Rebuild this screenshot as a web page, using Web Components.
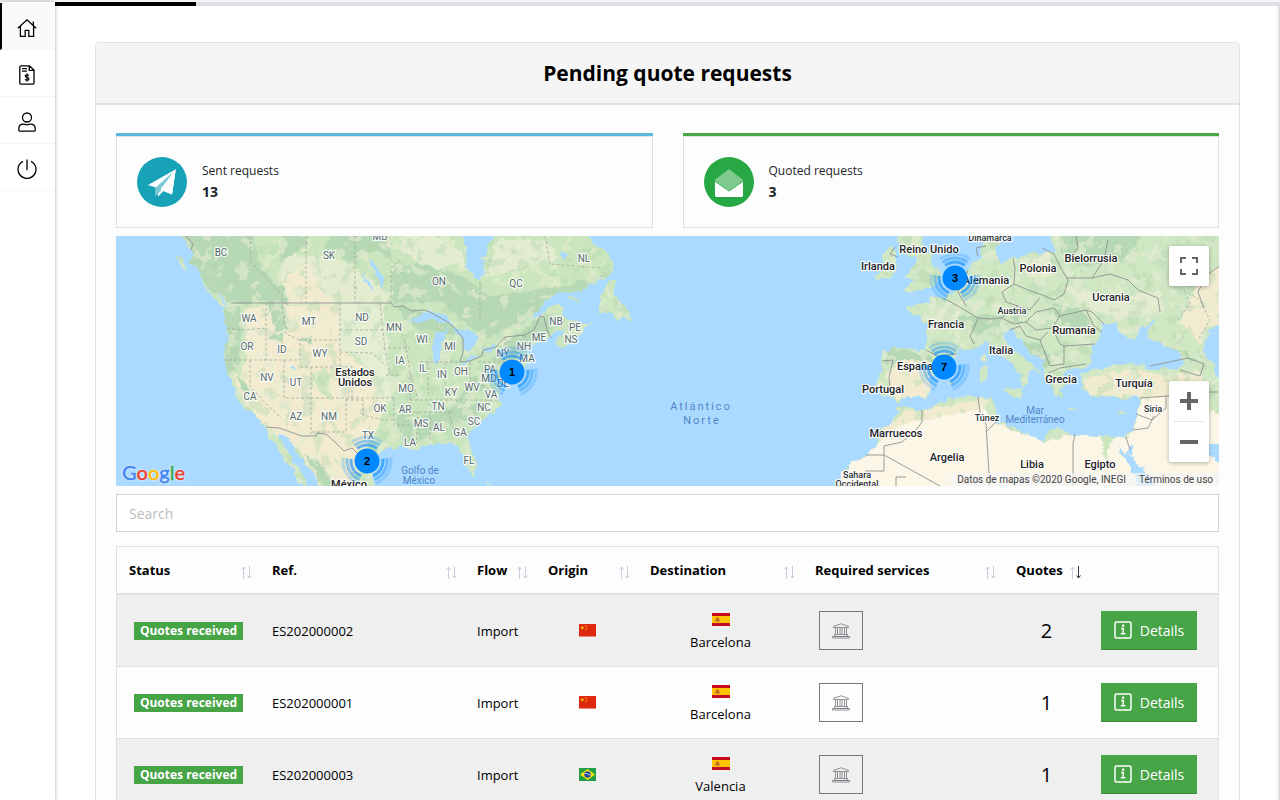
<!DOCTYPE html>
<html lang="en">
<head>
<meta charset="utf-8">
<meta name="viewport" content="width=device-width, initial-scale=1">
<title>Pending quote requests</title>
<style>
    body {
        margin: 0;
        background: #fff;
        color: #000;
        font-family: "Open Sans", sans-serif;
        font-size: 13px;
    }
</style>
</head>
<body>

<app-shell>
    <side-nav slot="nav"></side-nav>
    <page-card>
        <span slot="title">Pending quote requests</span>
        <div style="display: grid; grid-template-columns: 1fr 1fr; gap: 30px">
            <stat-card kind="sent"><span slot="label">Sent requests</span><span slot="value">13</span></stat-card>
            <stat-card kind="quoted"><span slot="label">Quoted requests</span><span slot="value">3</span></stat-card>
        </div>
        <cluster-map></cluster-map>
        <search-box></search-box>
        <quote-table></quote-table>
    </page-card>
</app-shell>

<script>

// ---------- shell ----------

class AppShell extends HTMLElement {
    constructor() {
        super();
        this.attachShadow({mode: 'open'}).innerHTML = `
            <style>
                :host {
                    display: grid;
                    grid-template-columns: 55px 1fr;
                    grid-template-rows: 2px 1fr;
                    height: 100vh;
                    overflow: hidden;
                }
                .strip { grid-column: 1 / 3; background: #f5f5f5; }
                .side { box-shadow: 0 0 4px rgba(0,0,0,.35); z-index: 1; background: #fff; }
                .content {
                    overflow-y: auto;
                    scrollbar-width: none;
                    background: linear-gradient(to left, #d0d0d0, #f4f4f4 2px, #fff 5px);
                }
                .progress { height: 4px; background: #e0e1e6; }
                .progress div { height: 4px; width: 141px; background: #000; }
                main { padding: 36px 40px 40px; }
            </style>
            <div class="strip"></div>
            <div class="side"><slot name="nav"></slot></div>
            <div class="content">
                <div class="progress"><div></div></div>
                <main><slot></slot></main>
            </div>
        `;
    }
}

class SideNav extends HTMLElement {
    constructor() {
        super();
        this.attachShadow({mode: 'open'}).innerHTML = `
            <style>
                :host { display: block; padding-top: 1px; }
                a {
                    display: flex;
                    align-items: center;
                    justify-content: center;
                    box-sizing: border-box;
                    height: 47px;
                    padding: 3px 1px 0 0;
                    color: #000;
                    border-bottom: 1px solid #f5f5f5;
                }
                a.active { background: #fafafa; border-left: 2px solid #000; padding-right: 3px; }
                svg { width: 20px; height: 20px; fill: none; stroke: currentColor; stroke-width: 1.3; }
            </style>
            <a class="active" href="#home" aria-label="Home">
                <svg viewBox="0 0 20 20"><path d="M.8 10.200 10 1.800l9.200 8.400M16.300 7.400V3.500M3.400 8.200v10.100h4.800v-5.900h3.600v5.900h4.800V8.200"/></svg>
            </a>
            <a href="#quotes" aria-label="Quotes">
                <svg viewBox="0 0 20 20"><path d="M4 .8h8.500L17 5v13a1.200 1.200 0 0 1-1.200 1.200H4A1.200 1.200 0 0 1 2.800 18V2A1.200 1.200 0 0 1 4 .8zM12.300 1v4.300H17M5 3.600h5M5 6.200h5"/><path d="M11.800 10.500c-.5-.5-1.100-.7-1.800-.7-1.100 0-1.800.5-1.800 1.300 0 1.700 3.700 1 3.700 2.800 0 .9-.7 1.300-1.900 1.300-.8 0-1.500-.2-2.100-.8M10 8.500v8" stroke-width="1.200"/></svg>
            </a>
            <a href="#account" aria-label="Account">
                <svg viewBox="0 0 20 20"><circle cx="10" cy="5.500" r="4.500"/><path d="M6.300 12.200c1.300 0 2 .6 3.700.6s2.400-.6 3.700-.6c2.600 0 4.500 1.700 4.500 4.600V18c0 .7-.5 1.200-1.200 1.200H3c-.7 0-1.200-.5-1.200-1.200v-1.200c0-2.900 1.900-4.600 4.500-4.600z"/></svg>
            </a>
            <a href="#logout" aria-label="Log out">
                <svg viewBox="0 0 20 20"><path d="M10 .5v10.800M6 2.300a9 9 0 1 0 8 0"/></svg>
            </a>
        `;
    }
}

class PageCard extends HTMLElement {
    constructor() {
        super();
        this.attachShadow({mode: 'open'}).innerHTML = `
            <style>
                :host {
                    display: block;
                    border: 1px solid #dee2e6;
                    border-radius: 4px;
                    background: #fdfdfd;
                }
                h1 {
                    margin: 0;
                    padding: 16px 20px;
                    border-bottom: 2px solid #dee2e6;
                    border-radius: 4px 4px 0 0;
                    background: #f5f5f5;
                    font-size: 21px;
                    line-height: 28px;
                    text-align: center;
                }
                .body { padding: 28px 20px; }
            </style>
            <h1><slot name="title"></slot></h1>
            <div class="body"><slot></slot></div>
        `;
    }
}

// ---------- stat cards ----------

const statIcons = {
    sent: '<path d="M11 28 38.800 12.200 35 37.600 26.500 34 21 39.500v-8.200z" fill="#fff"/><path d="M18.200 31v8.600L24 34l12-19z" fill="#7cc8d6"/><path d="M38.800 12.200 23.300 32.500 35 37.600z" fill="#fff"/>',
    quoted: '<path d="M11 24.800 25 34.500l14-9.700v13.400c0 1-.7 1.700-1.700 1.700H12.700c-1 0-1.700-.7-1.700-1.700z" fill="#fff"/><path d="M11 22.800 23.700 13c.8-.6 1.800-.6 2.600 0L39 22.800v1L26.300 33c-.8.600-1.800.600-2.600 0L11 23.800z" fill="#7fcb8f"/>'
};

class StatCard extends HTMLElement {
    constructor() {
        super();
        this.attachShadow({mode: 'open'});
    }

    connectedCallback() {
        const kind = this.getAttribute('kind');
        this.shadowRoot.innerHTML = `
            <style>
                :host {
                    display: block;
                    border-top: 3px solid var(--line);
                    color: #212529;
                }
                :host([kind="sent"]) { --line: #5bb7db; --disc: #18a2b8; }
                :host([kind="quoted"]) { --line: #47a447; --disc: #28a745; }
                .box {
                    display: flex;
                    align-items: center;
                    gap: 15px;
                    padding: 20px;
                    border: 1px solid #dee2e6;
                }
                svg { width: 50px; height: 50px; }
                circle { fill: var(--disc); }
                .label { font-size: 12px; line-height: 20px; }
                .value { font-size: 14px; line-height: 22px; font-weight: bold; }
            </style>
            <div class="box">
                <svg viewBox="0 0 50 50"><circle cx="25" cy="25" r="25"/>${statIcons[kind]}</svg>
                <div>
                    <div class="label"><slot name="label"></slot></div>
                    <div class="value"><slot name="value"></slot></div>
                </div>
            </div>
        `;
    }
}

// ---------- map ----------

const land = `
    M181 230 186 243 191 250 192 263 203 278 204 285 216 295 231 303 223 308 226 327 227 335 224 358 228 373 233 385 239 402 244 408
    256 417 266 427 274 445 283 455 284 462 293 468 298 480 303 492H308L301 472 294 462 289 452 283 443 279 433 289 438 296 452 306 465
    316 478 323 492H377L372 476 370 468 376 456 389 448 405 448 417 450 423 447 430 442 447 443 458 447 463 455 465 465 473 477 477 470
    475 458 470 445 469 435 477 425 487 417 495 410 501 405 498 398 502 385 508 378 514 370 523 367 532 363 527 352 530 347 540 342
    550 338 557 330 566 328 555 342 562 348 570 342 583 332 591 323 580 323 567 322 562 313 565 306 550 306 540 315 530 321
    543 303 557 293 580 292 593 283 607 278 615 272 613 262 607 252 593 242 583 230H498L490 242 482 258 485 272 480 282 465 267
    467 248 455 230Z
    M175 256 183 258 186 273Z M202 286 214 293 231 310 220 304Z
    M597 313 602 295 608 282 615 281 613 293 623 303 630 312 631 322 623 316 617 321 610 313Z
    M568 296 576 298 581 302 572 300Z
    M875 277 885 269 882 257 890 246 897 255 897 268 890 278 878 281Z
    M898 238 902 252 917 258 912 268 905 278 914 281 903 293 917 290 937 285 942 272 933 267 930 255 922 242V230H898Z
    M984 230 982 248 983 258 970 264 966 274 957 288 943 298 931 298 928 304 905 306 907 312 920 316 927 326 926 350 900 348
    882 350 882 360 880 375 876 386 880 396 893 397 898 403 905 398 925 398 930 390 932 378 945 366 957 356 955 350 967 350 977 348
    987 340 997 350 1010 363 1021 374 1022 388 1030 381 1028 373 1032 370 1041 375 1030 362 1017 353 1007 342 1003 333 1010 330
    1020 338 1030 352 1043 360 1044 372 1050 382 1053 395 1062 398 1060 388 1068 383 1063 375 1065 370 1077 368 1086 369
    1091 358 1093 347 1100 335 1103 325 1117 322 1119 332 1130 338 1138 336 1139 330 1150 323 1160 318 1147 330 1150 338 1161 343
    1177 351 1185 362 1180 368 1150 368 1133 363 1117 365 1097 370 1082 374 1080 380 1084 392 1097 398 1113 396 1125 400 1140 396
    1136 410 1133 432 1120 437 1097 437 1073 435 1060 427 1047 430 1043 441 1027 435 1017 428 997 422 994 414 996 407 992 398
    977 397 950 398 922 412 903 405 898 408 893 422 878 432 876 445 862 459 842 470 835 492H1225V230H1048L1055 252 1040 254
    1028 252 1012 260 1000 263 996 254 1000 242 1003 230Z
    M981 356 987 354 987 364 982 363Z M981 367 987 366 986 381 981 382Z M1003 390 1023 388 1019 399Z M1067 408 1080 410 1072 412Z
    M1117 413 1127 409 1122 415Z M948 382 954 380 952 385Z M488 478 491 484 488 482Z`;

// fill colour and outline of each vegetation patch
const patches = [
    ['#cbe6be', 'M180 230H620V300L500 320 440 300 400 310 390 300 350 300 285 270 250 330 225 400 215 300Z'],
    ['#e4ecd0', 'M282 252 345 262 390 295 385 306 280 304Z'],
    ['#f2ebd0', 'M283 276 310 262 320 292 343 303 283 303ZM376 240 393 236 388 250Z'],
    ['#b7d8b5', 'M181 230H250L262 270 285 290 290 312 278 334 266 300 240 304 212 292 190 260ZM330 230H385L392 260 372 250 350 262 325 250ZM281 230H316L300 250 280 262Z'],
    ['#b7d8b5', 'M392 270 420 262 465 278 490 296 520 292 560 286 600 276 612 270 610 280 580 292 556 294 530 320 500 334 485 340 470 326 440 312 392 304Z'],
    ['#e3ecd0', 'M400 250 432 234 462 252 465 266 450 264 440 270 418 262ZM496 240 545 240 560 258 510 270 488 278ZM400 236 425 234 402 250Z'],
    ['#cbe6be', 'M380 305 440 300 480 338 560 315 590 325 500 410 470 430 477 470 465 465 455 442 390 450 380 410Z'],
    ['#b7d8b5', 'M395 305 428 314 460 330 465 338 410 326ZM500 346 545 314 566 320 540 340 520 350 508 372 460 405 450 410 468 384 488 364ZM398 415 414 410 412 445 396 434ZM414 418 490 400 480 412 420 442Z'],
    ['#f2ebd0', 'M245 308 342 304 345 350 366 370 386 400 378 426 370 440 350 492H325L297 448 268 428 246 406 234 376 247 362Z'],
    ['#e4eed2', 'M340 302 384 304 392 400 384 402 360 355 341 350Z'],
    ['#b7d8b5', 'M224 308 240 306 242 340 236 372 226 374ZM236 376 243 380 256 402 248 398ZM300 340 310 334 312 346ZM266 336 284 332 282 344ZM304 454 320 462 334 484 345 492H326ZM268 302 284 304 288 330 276 332Z'],
    ['#cfe5c0', 'M312 374 326 368 332 400 316 388ZM232 364 242 366 240 380Z'],
    ['#b7d8b5', 'M1054 230H1145L1125 258 1090 266 1066 262ZM956 318 985 314 1012 316 1028 312 1020 322 995 326 975 336ZM1052 302 1082 310 1096 332 1070 330 1056 318ZM1020 340 1042 346 1056 362 1046 368ZM884 348 926 352 935 362 902 360 888 366ZM1147 340 1186 352 1196 362 1168 356Z'],
    ['#e4ecd0', 'M1060 284 1110 300 1160 290 1165 312 1120 320 1080 304ZM1020 260 1050 250 1052 276 1030 280ZM930 320 948 302 960 312 945 330Z'],
    ['#f2ebd0', 'M898 360 940 362 930 396 898 400 886 376ZM1084 378 1140 368 1160 376 1200 370 1210 410 1150 398 1088 394ZM1196 286 1225 260V325H1206L1200 345 1180 322ZM898 412 924 410 990 398 984 410 910 440 876 440Z'],
    ['#fbf6e6', 'M902 424 984 408 998 424 1044 442 1074 434 1130 437 1140 400 1170 396 1225 416V492H833L840 474 876 444Z'],
    ['#cbe6be', 'M1100 436 1116 435 1108 448 1106 470 1104 448ZM894 414 904 408 896 424ZM930 402 965 398 950 405Z']
];

const lakes = `
    M406 323 420 316 430 310 444 315 453 324 442 324 430 319 418 322Z
    M434 362 432 346 436 334 446 328 442 342 440 356 438 363Z
    M452 326 462 330 470 330 478 337 474 346 464 351 463 340 456 334Z
    M459 363 470 357 483 353 474 359 463 364Z M482 350 490 347 499 346 494 350 484 352Z
    M370 259 376 266 384 280 382 290 376 278ZM360 263 366 277 375 291 368 287Z M292 365 294 369 291 368Z
    M473 253 478 259 475 262Z M561 252 568 256 562 259Z
    M1225 325 1211 328 1204 342 1206 358 1214 362 1216 378 1225 384Z
    M1205 445 1225 442V464L1218 462Z M1117 447 1125 458 1133 474 1142 492H1160L1144 470 1130 454Z M1131 446 1134 456 1127 452Z
    M1038 230 1042 244 1034 250 1022 252 1006 258 1002 244 1006 230Z`;

const borders = `
    M231 303H391L394 307 403 306 412 311 424 310 430 312 446 321 454 327 463 338 463 352 460 362 470 361 482 356 483 350 496 347
    505 337 525 335 534 330 540 316 544 317 547 330 551 338
    M266 427 279 428 302 436 316 436 317 433 326 434 334 441 344 451 352 448 362 458 M186 236 193 244 191 250
    M895 247 890 254 898 257 M926 350 937 356 957 354 M882 361 893 360 889 377 890 389
    M943 298 958 306 968 312 978 318 974 328 970 336 974 344 M968 270 964 282 958 292 966 306 M978 256 976 248 986 246
    M1013 258 1015 268 1014 284 1028 290 1040 294 1054 300 1064 294 1068 280 1062 270 1054 254 M978 318 990 319 1002 318 1010 310 1018 306
    M1014 284 1002 292 1006 302 1018 306 1030 310 1040 298 M1002 318 1014 324 1026 322 1036 312 1054 308 1060 316 1052 328 1036 330 1026 322
    M1010 330 1020 326 1026 336 1040 340 1048 332 M1052 328 1060 344 1064 346 1095 344 M1064 346 1064 364 1050 366 1046 356 1040 340
    M1048 373 1060 368 1086 364 M1060 316 1086 310 1094 326 1102 332 M1086 310 1092 312 1104 324 M1066 278 1092 278 1110 274 1128 280 1138 290
    1158 298 1160 312 M1066 262 1078 248 1076 236 M1092 278 1104 260 1108 240 M1054 254 1042 248 M1150 366 1188 358 1204 364 1200 376 1180 370
    M1140 398 1168 396 1184 392 1218 392 M1136 414 1152 420 1166 408 1166 396 M1133 430 1148 428 1154 416 M1225 262 1206 276 1198 292 1204 308
    M922 410 922 422 916 430 902 442 884 446V455L940 486 M978 397 980 412 986 424 987 440 990 492 M996 422 986 432 M1075 434 1073 444V492
    M884 455H866 M884 455V471H865 M896 486V477H906 M1126 437 1130 450`;

const stateLines = `
    M306 236V303 M355 236V303 M250 236 251 262 283 296 282 303 M480 282V322 M391 303V268L400 260 M227 328 243 330 266 328M266 303V360
    M224 360H300V340H340 M266 328 M282 306 286 334 300 340M340 303V367 M340 330H384 M340 352 372 353 386 366 M250 360V387L281 418
    M284 360V398H394 M311 367V434 M300 367H352V398M380 303 385 350 390 374 M386 375H402 M346 398V432H311 M346 400H363V415L384 420 392 420
    M394 398V425H410 M383 348H410 M405 340 410 372 418 400 M410 372V400M420 362H460M428 362V394 M445 362V390 M410 400H498 M404 412H452
    M418 412 416 448 M430 412V442 M448 412 456 436H470 M470 362V378L490 390 M478 362H508 M505 337V360M525 335V352
    M1178 320 1190 304 1184 290 1200 300 1210 320 1198 340 M545 236 550 264 600 268`;

// text, centre x, baseline y
const stateNames = [
    ['BC', 221, 256], ['SK', 329, 259], ['MB', 380, 240], ['ON', 439, 285], ['QC', 516, 287], ['NL', 584, 262], ['WA', 249, 322],
    ['MT', 309, 325], ['ND', 362, 321], ['MN', 394, 331], ['OR', 247, 350], ['ID', 282, 353], ['WY', 320, 357], ['SD', 361, 345],
    ['WI', 422, 343], ['MI', 450, 350], ['NB', 556, 325], ['PE', 575, 331], ['NS', 571, 343], ['ME', 539, 341], ['NH', 524, 350],
    ['NY', 503, 357], ['MA', 527, 362], ['IA', 400, 364], ['IL', 423, 372], ['IN', 442, 378], ['OH', 461, 375], ['PA', 490, 373],
    ['MD', 489, 382], ['DE', 503, 387], ['NV', 267, 381], ['UT', 296, 386], ['MO', 406, 392], ['KY', 451, 396], ['WV', 472, 391],
    ['VA', 491, 398], ['CA', 250, 400], ['AZ', 296, 420], ['NM', 329, 420], ['OK', 380, 412], ['AR', 405, 413], ['TN', 438, 410],
    ['NC', 484, 411], ['MS', 421, 427], ['AL', 439, 431], ['GA', 460, 436], ['SC', 474, 425], ['TX', 368, 439], ['LA', 410, 446],
    ['FL', 469, 464]
];
const countries = [
    ['Estados', 355, 376], ['Unidos', 355, 386], ['México', 349, 488], ['Reino Unido', 929, 253], ['Irlanda', 878, 270],
    ['Alemania', 986, 284], ['Polonia', 1038, 272], ['Bielorrusia', 1091, 262], ['Ucrania', 1111, 301], ['Francia', 946, 328],
    ['Rumanía', 1074, 334], ['Italia', 1001, 354], ['España', 915, 370], ['Portugal', 883, 393], ['Grecia', 1061, 383],
    ['Turquía', 1134, 387], ['Marruecos', 896, 437], ['Argelia', 947, 461], ['Libia', 1032, 468], ['Egipto', 1100, 468], ['Irak', 1178, 429]
];
const smallCountries = [
    ['Dinamarca', 990, 241], ['Austria', 1012, 314], ['Túnez', 987, 421], ['Siria', 1153, 412], ['Sahara', 857, 478], ['Occidental', 857, 487]
];
const seas = [['Golfo de', 420, 474], ['México', 419, 484], ['Mar', 1035, 414], ['Mediterráneo', 1035, 423]];
const clusters = [[367, 461, 2], [512, 372, 1], [955, 278, 3], [944, 367, 7]];

const labels = (list, cls) => list.map(([t, x, y]) => `<text class="${cls}" x="${x}" y="${y}">${t}</text>`).join('');

class ClusterMap extends HTMLElement {
    constructor() {
        super();
        this.attachShadow({mode: 'open'}).innerHTML = `
            <style>
                :host {
                    display: block;
                    position: relative;
                    height: 250px;
                    margin-top: 8px;
                    overflow: hidden;
                    background: #aadaff;
                    font-family: Roboto, sans-serif;
                }
                .map { display: block; width: 100%; height: 250px; }
                text { text-anchor: middle; paint-order: stroke; stroke: rgba(255,255,255,.85); stroke-width: 2.5px; stroke-linejoin: round; }
                .state { font-size: 10px; fill: #56696b; }
                .country { font-size: 11px; font-weight: 500; fill: #1f2326; }
                .small { font-size: 9px; font-weight: 500; fill: #2b3033; }
                .sea { font-size: 10px; fill: #5187c8; stroke: none; }
                .ocean { font-size: 11px; fill: #5187c8; stroke: none; letter-spacing: 2px; }
                .count { font: bold 11px "Liberation Sans", sans-serif; fill: #000; stroke: none; }
                .logo {
                    position: absolute;
                    left: 6px;
                    bottom: 2px;
                    font: 500 20px/24px Lato, sans-serif;
                    text-decoration: none;
                    text-shadow: 0 0 2px #fff, 0 0 2px #fff;
                    -webkit-text-stroke: .4px;
                }
                .blue { color: #4285f4; }
                .red { color: #ea4335; }
                .yellow { color: #fbbc05; }
                .green { color: #34a853; }
                .controls {
                    position: absolute;
                    inset: 10px 10px 24px auto;
                    display: flex;
                    flex-direction: column;
                    justify-content: space-between;
                }
                .group { background: #fff; border-radius: 2px; box-shadow: 0 1px 4px rgba(0,0,0,.3); }
                button {
                    display: block;
                    width: 40px;
                    height: 40px;
                    padding: 11px;
                    border: 0;
                    background: none;
                }
                button svg { display: block; width: 18px; height: 18px; fill: #666; }
                hr { margin: 0 5px; border: 0; border-top: 1px solid #e6e6e6; }
                .legal {
                    position: absolute;
                    right: 0;
                    bottom: 0;
                    display: flex;
                    gap: 1px;
                    font-size: 10px;
                    line-height: 13px;
                    color: #444;
                }
                .legal > * { padding: 0 6px; background: rgba(245,245,245,.7); color: inherit; text-decoration: none; }
            </style>
            <svg class="map" viewBox="116 236 1103 250" preserveAspectRatio="xMidYMid slice">
                <defs>
                    <clipPath id="land"><path d="${land}"/></clipPath>
                    <filter id="rough" x="0" y="0" width="100%" height="100%">
                        <feTurbulence type="fractalNoise" baseFrequency=".12" numOctaves="3" seed="4"/>
                        <feDisplacementMap in="SourceGraphic" scale="8" xChannelSelector="R" yChannelSelector="G"/>
                    </filter>
                    <filter id="mottle" x="0" y="0" width="100%" height="100%" color-interpolation-filters="sRGB">
                        <feTurbulence type="fractalNoise" baseFrequency=".07" numOctaves="5" seed="9"/>
                        <feColorMatrix values="0 0 0 0 .7  0 0 0 0 .84  0 0 0 0 .69  14 0 0 0 -8"/>
                    </filter>
                    <filter id="fields" x="0" y="0" width="100%" height="100%" color-interpolation-filters="sRGB">
                        <feTurbulence type="fractalNoise" baseFrequency=".08" numOctaves="5" seed="21"/>
                        <feColorMatrix values="0 0 0 0 .9  0 0 0 0 .93  0 0 0 0 .82  14 0 0 0 -8"/>
                    </filter>
                </defs>
                <g filter="url(#rough)">
                    <rect x="100" y="220" width="1140" height="280" fill="#aadaff"/>
                    <path d="${land}" fill="#cfe7c3"/>
                    <g clip-path="url(#land)">
                        ${patches.slice(0, -2).map(([c, d]) => `<path fill="${c}" d="${d}"/>`).join('')}
                        <rect x="116" y="236" width="1103" height="250" filter="url(#mottle)" opacity=".4"/>
                        <rect x="116" y="236" width="1103" height="250" filter="url(#fields)" opacity=".6"/>
                        ${patches.slice(-2).map(([c, d]) => `<path fill="${c}" d="${d}"/>`).join('')}
                    </g>
                    <path d="${lakes}" fill="#aadaff"/>
                </g>
                <path d="${stateLines}" fill="none" stroke="#a3aaa2" stroke-width=".8" stroke-dasharray="3 2"/>
                <path d="${borders}" fill="none" stroke="#8e9391" stroke-width=".9"/>
                ${labels(stateNames, 'state')}
                ${labels(countries, 'country')}
                ${labels(smallCountries, 'small')}
                ${labels(seas, 'sea')}
                <text class="ocean" x="701" y="410">Atlántico</text>
                <text class="ocean" x="702" y="424">Norte</text>
                ${clusters.map(([x, y, n]) => `
                    <g fill="none" stroke="#0089ff" stroke-width="3" transform="translate(${x} ${y})">
                        <g transform="rotate(-8)">
                            <circle r="16" pathLength="360" stroke-dasharray="76 44" opacity=".6"/>
                            <circle r="20" pathLength="360" stroke-dasharray="76 44" opacity=".4"/>
                            <circle r="24" pathLength="360" stroke-dasharray="76 44" opacity=".2"/>
                        </g>
                        <circle r="12.500" fill="#0089ff" stroke="none"/>
                        <text class="count" y="4">${n}</text>
                    </g>`).join('')}
            </svg>
            <a class="logo" href="#map" aria-label="Google"><span class="blue">G</span><span class="red">o</span><span class="yellow">o</span><span class="blue">g</span><span class="green">l</span><span class="red">e</span></a>
            <div class="legal"><span>Datos de mapas ©2020 Google, INEGI</span><a href="#terms">Términos de uso</a></div>
            <div class="controls">
                <div class="group">
                    <button aria-label="Full screen"><svg viewBox="0 0 18 18"><path d="M0 0h6v2H2v4H0zM12 0h6v6h-2V2h-4zM0 12h2v4h4v2H0zM16 12h2v6h-6v-2h4z"/></svg></button>
                </div>
                <div class="group">
                    <button aria-label="Zoom in"><svg viewBox="0 0 18 18"><path d="M7 0h4v7h7v4h-7v7H7v-7H0V7h7z"/></svg></button>
                    <hr>
                    <button aria-label="Zoom out"><svg viewBox="0 0 18 18"><path d="M0 7h18v4H0z"/></svg></button>
                </div>
            </div>
        `;
    }
}

// ---------- search ----------

class SearchBox extends HTMLElement {
    constructor() {
        super();
        this.attachShadow({mode: 'open'}).innerHTML = `
            <style>
                :host { display: block; margin: 8px 0 14px; }
                input {
                    display: block;
                    box-sizing: border-box;
                    width: 100%;
                    height: 38px;
                    padding: 0 12px;
                    border: 1px solid #ced4da;
                    border-radius: 0;
                    background: #fff;
                    font: 14px "Open Sans", sans-serif;
                }
                input::placeholder { color: #bdbdbd; }
            </style>
            <input type="text" placeholder="Search" aria-label="Search">
        `;
    }
}

// ---------- table ----------

const flags = {
    cn: `<svg class="flag" width="17" height="13" viewBox="0 0 17 13"><path fill="#de2910" d="M0 0h17v13H0z"/><path fill="#f0887a" d="M0 12h17v1H0z"/>
        <path fill="#ffde00" d="m3.200 1.500.5 1.400h1.500L4 3.800l.5 1.500-1.300-.9-1.300.9.500-1.500-1.200-.9h1.500zM6 .9h.9v.9H6zM7.200 2.300h.9v.9h-.9zM7.200 4.100h.9v.9h-.9zM6 5.400h.9v.9H6z"/></svg>`,
    br: `<svg class="flag" width="17" height="13" viewBox="0 0 17 13"><path fill="#229e45" d="M0 0h17v13H0z"/><path fill="#f8e509" d="m8.500 1 7.500 5.500L8.500 12 1 6.500z"/>
        <circle cx="8.500" cy="6.500" r="3.200" fill="#2b49a3"/><path d="M5.700 5.500c2-.3 4.200.5 5.700 2.200" fill="none" stroke="#fff" stroke-width=".7"/></svg>`,
    es: `<svg class="flag" width="18" height="13" viewBox="0 0 18 13"><path fill="#c60b1e" d="M0 0h18v13H0z"/><path fill="#ffc400" d="M0 3h18v7H0z"/>
        <path fill="#d9913a" d="M3 5.500h1V9H3zM7 5.500h1V9H7z"/><path fill="#b5562a" d="M4.300 5.500h2.400v2.400l-1.200 1-1.200-1z"/><path fill="#ad1519" d="M4.800 4.500h1.400v1H4.800z"/></svg>`
};

const quotes = [
    {ref: 'ES202000002', from: 'cn', to: 'Barcelona', count: 2},
    {ref: 'ES202000001', from: 'cn', to: 'Barcelona', count: 1},
    {ref: 'ES202000003', from: 'br', to: 'Valencia', count: 1}
];

const columns = ['Status', 'Ref.', 'Flow', 'Origin', 'Destination', 'Required services', 'Quotes'];

class QuoteTable extends HTMLElement {
    constructor() {
        super();
        this.attachShadow({mode: 'open'});
        this.render();
    }

    head(name) {
        const active = name === 'Quotes' ? 'on' : '';
        return `<th><div class="sort">${name}
            <svg width="11" height="13" viewBox="0 0 11 13"><path d="M2.500 13V1M.5 3.500l2-2.500 2 2.500"/><path class="${active}" d="M8.500 0v12M6.500 9.500l2 2.500 2-2.500"/></svg>
        </div></th>`;
    }

    row(q) {
        return `
            <tr>
                <td><span class="badge">Quotes received</span></td>
                <td>${q.ref}</td>
                <td>Import</td>
                <td class="mid">${flags[q.from]}</td>
                <td class="mid dest">${flags.es}<div class="city">${q.to}</div></td>
                <td><button class="service" aria-label="Customs">
                    <svg width="18" height="16" viewBox="0 0 18 16"><path d="M1.500 4.500V3.400L9 .8l7.500 2.600v1.100zM3.500 5v6.500M5.500 5v6.500M8 5v6.500M10 5v6.500M12.500 5v6.500M14.500 5v6.500M2.500 11.500h13v2h-13zM.5 15v-1.500h17V15z"/></svg>
                </button></td>
                <td class="mid count">${q.count}</td>
                <td><button class="details">
                    <svg width="18" height="18" viewBox="0 0 18 18"><rect x="1" y="1" width="16" height="16" rx="1.500"/><path d="M7.200 7.500h2v5M6.800 12.800h4.600M9.200 7.500v5"/><path d="M9.100 3.600v2.200" stroke-width="2.200"/></svg>
                    Details</button></td>
            </tr>`;
    }

    render() {
        this.shadowRoot.innerHTML = `
            <style>
                :host { display: block; }
                table {
                    width: 100%;
                    table-layout: fixed;
                    border-collapse: separate;
                    border-spacing: 0;
                    border: 1px solid #dee2e6;
                    line-height: 20px;
                }
                .w-status { width: 143px; }
                .w-flow { width: 71px; }
                .w-origin { width: 102px; }
                .w-dest { width: 165px; }
                .w-serv { width: 201px; }
                .w-quotes { width: 85px; }
                .w-action { width: 129px; }
                th {
                    padding: 13px 12px;
                    border-bottom: 2px solid #dee2e6;
                    text-align: left;
                    white-space: nowrap;
                }
                th:not(:last-child) { padding-right: 8px; }
                .sort { display: flex; justify-content: space-between; align-items: center; }
                .sort svg { margin-top: 4px; fill: none; stroke: #cbcbdc; }
                .sort .on { stroke: #334; }
                td {
                    height: 71px;
                    padding: 0 12px;
                    border-bottom: 1px solid #dee2e6;
                }
                tr:nth-child(odd) td { background: #efefef; }
                .mid { text-align: center; }
                .flag { display: block; margin: 0 auto; }
                .dest { height: 67px; padding-top: 4px; }
                .city { margin-top: 6px; }
                .badge {
                    display: block;
                    width: 109px;
                    margin-left: 5px;
                    background: #47a447;
                    color: #fff;
                    font-size: 12px;
                    font-weight: bold;
                    line-height: 18px;
                    text-align: center;
                }
                .count { font-size: 20px; }
                button { display: flex; align-items: center; justify-content: center; height: 39px; box-sizing: border-box; }
                button svg { fill: none; stroke: currentColor; }
                .service {
                    width: 44px;
                    margin-left: 4px;
                    border: 1px solid #75797d;
                    background: none;
                    color: #75797d;
                }
                .service svg { stroke-width: .8; }
                .details {
                    gap: 8px;
                    width: 96px;
                    padding: 0;
                    border: 0;
                    border-bottom: 1px solid #3a873a;
                    background: #47a447;
                    color: #fff;
                    font: 14px "Open Sans", sans-serif;
                }
                .details svg { stroke-width: 1.5; }
            </style>
            <table>
                <colgroup>
                    <col class="w-status"><col><col class="w-flow"><col class="w-origin">
                    <col class="w-dest"><col class="w-serv"><col class="w-quotes"><col class="w-action">
                </colgroup>
                <thead><tr>${columns.map(c => this.head(c)).join('')}<th></th></tr></thead>
                <tbody>${quotes.map(q => this.row(q)).join('')}</tbody>
            </table>
        `;
    }
}

customElements.define('app-shell', AppShell);
customElements.define('side-nav', SideNav);
customElements.define('page-card', PageCard);
customElements.define('stat-card', StatCard);
customElements.define('cluster-map', ClusterMap);
customElements.define('search-box', SearchBox);
customElements.define('quote-table', QuoteTable);

</script>
</body>
</html>
